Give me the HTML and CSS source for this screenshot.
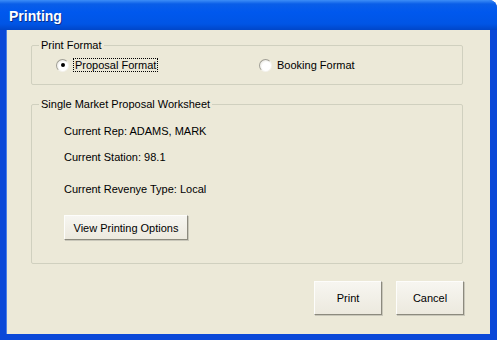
FILE: index.html
```html
<!DOCTYPE html>
<html>
<head>
    <title>Printing</title>
    <link rel="stylesheet" href="styles.css">
</head>
<body>
    <div class="window">
        <div class="titlebar">
            <span class="title">Printing</span>
        </div>

        <div class="client">
            <!-- Print format choice -->
            <fieldset class="group format">
                <legend>Print Format</legend>
                <div class="radio-row">
                    <label class="radio proposal">
                        <span class="dot checked"></span>
                        <span class="focus">Proposal Format</span>
                    </label>
                    <label class="radio booking">
                        <span class="dot"></span>
                        <span>Booking Format</span>
                    </label>
                </div>
            </fieldset>

            <!-- Worksheet info -->
            <fieldset class="group worksheet">
                <legend>Single Market Proposal Worksheet</legend>
                <p class="info rep">Current Rep: ADAMS, MARK</p>
                <p class="info station">Current Station: 98.1</p>
                <p class="info revenue">Current Revenye Type: Local</p>
                <button class="btn options">View Printing Options</button>
            </fieldset>

            <div class="actions">
                <button class="btn action">Print</button>
                <button class="btn action">Cancel</button>
            </div>
        </div>
    </div>
</body>
</html>
```

FILE: styles.css
```css
body { margin: 0; font-family: "Liberation Sans", Arial, sans-serif; font-size: 11px; color: #000; }
.window {
    width: 497px;
    height: 340px;
    display: flex;
    flex-direction: column;
    background: #0a48d8;
    border-top-right-radius: 8px;
    overflow: hidden;
}
.titlebar {
    height: 30px;
    flex: none;
    display: flex;
    align-items: center;
    padding-left: 9px;
    background: linear-gradient(to bottom, #3d8ef7 0, #0a5ee8 4px, #0058ee 12px, #0055e5 24px, #0046c8 30px);
}
.title {
    color: #fff;
    font-weight: bold;
    font-size: 14px;
    text-shadow: 1px 1px 0 #0a2f8c;
    padding-top: 1px;
}
.client {
    flex: 1;
    margin: 0 7px 6px 6px;
    background: #ece9d8;
    padding-top: 8px;
    border-left: 1px solid #4a7ee6;
}
.group {
    margin: 0 0 0 24px;
    width: 432px;
    box-sizing: border-box;
    padding: 0 7px;
    border: 1px solid #d0d0bf;
    border-radius: 2px;
    min-width: 0;
}
.group legend {
    padding: 0 2px;
    line-height: 14px;
}
.format { padding-top: 6px; padding-bottom: 12px; }
.worksheet { margin-top: 12px; padding-top: 13px; padding-bottom: 23px; }
.radio-row { display: flex; height: 14px; align-items: center; }
.radio { display: flex; align-items: center; gap: 5px; }
.proposal { margin-left: 17px; width: 203px; }
.dot {
    width: 11px;
    height: 11px;
    border-radius: 50%;
    border: 1px solid #a09f96;
    border-right-color: #f4f3ee;
    border-bottom-color: #f4f3ee;
    background: radial-gradient(circle at 60% 60%, #fff 0, #fff 45%, #dcdad0 100%);
    display: flex;
    align-items: center;
    justify-content: center;
}
.dot.checked::after {
    content: "";
    width: 4px;
    height: 4px;
    border-radius: 50%;
    background: #000;
}
.focus { outline: 1px dotted #000; outline-offset: 0; padding: 0 1px; }
.info { margin: 0 0 0 25px; line-height: 14px; }
.station { margin-top: 12px; }
.revenue { margin-top: 18px; }
.btn {
    font-family: inherit;
    font-size: 11px;
    color: #000;
    background: linear-gradient(to bottom, #f7f6f1, #ece9de);
    border: 1px solid #fdfdfb;
    border-right-color: #8c8a7e;
    border-bottom-color: #8c8a7e;
    box-shadow: 1px 1px 0 #c9c7ba;
    padding: 0;
    cursor: pointer;
}
.options { margin: 19px 0 0 25px; width: 124px; height: 25px; display: block; }
.actions { display: flex; justify-content: flex-end; gap: 14px; margin-top: 17px; padding-right: 26px; }
.action { width: 68px; height: 34px; }
```
